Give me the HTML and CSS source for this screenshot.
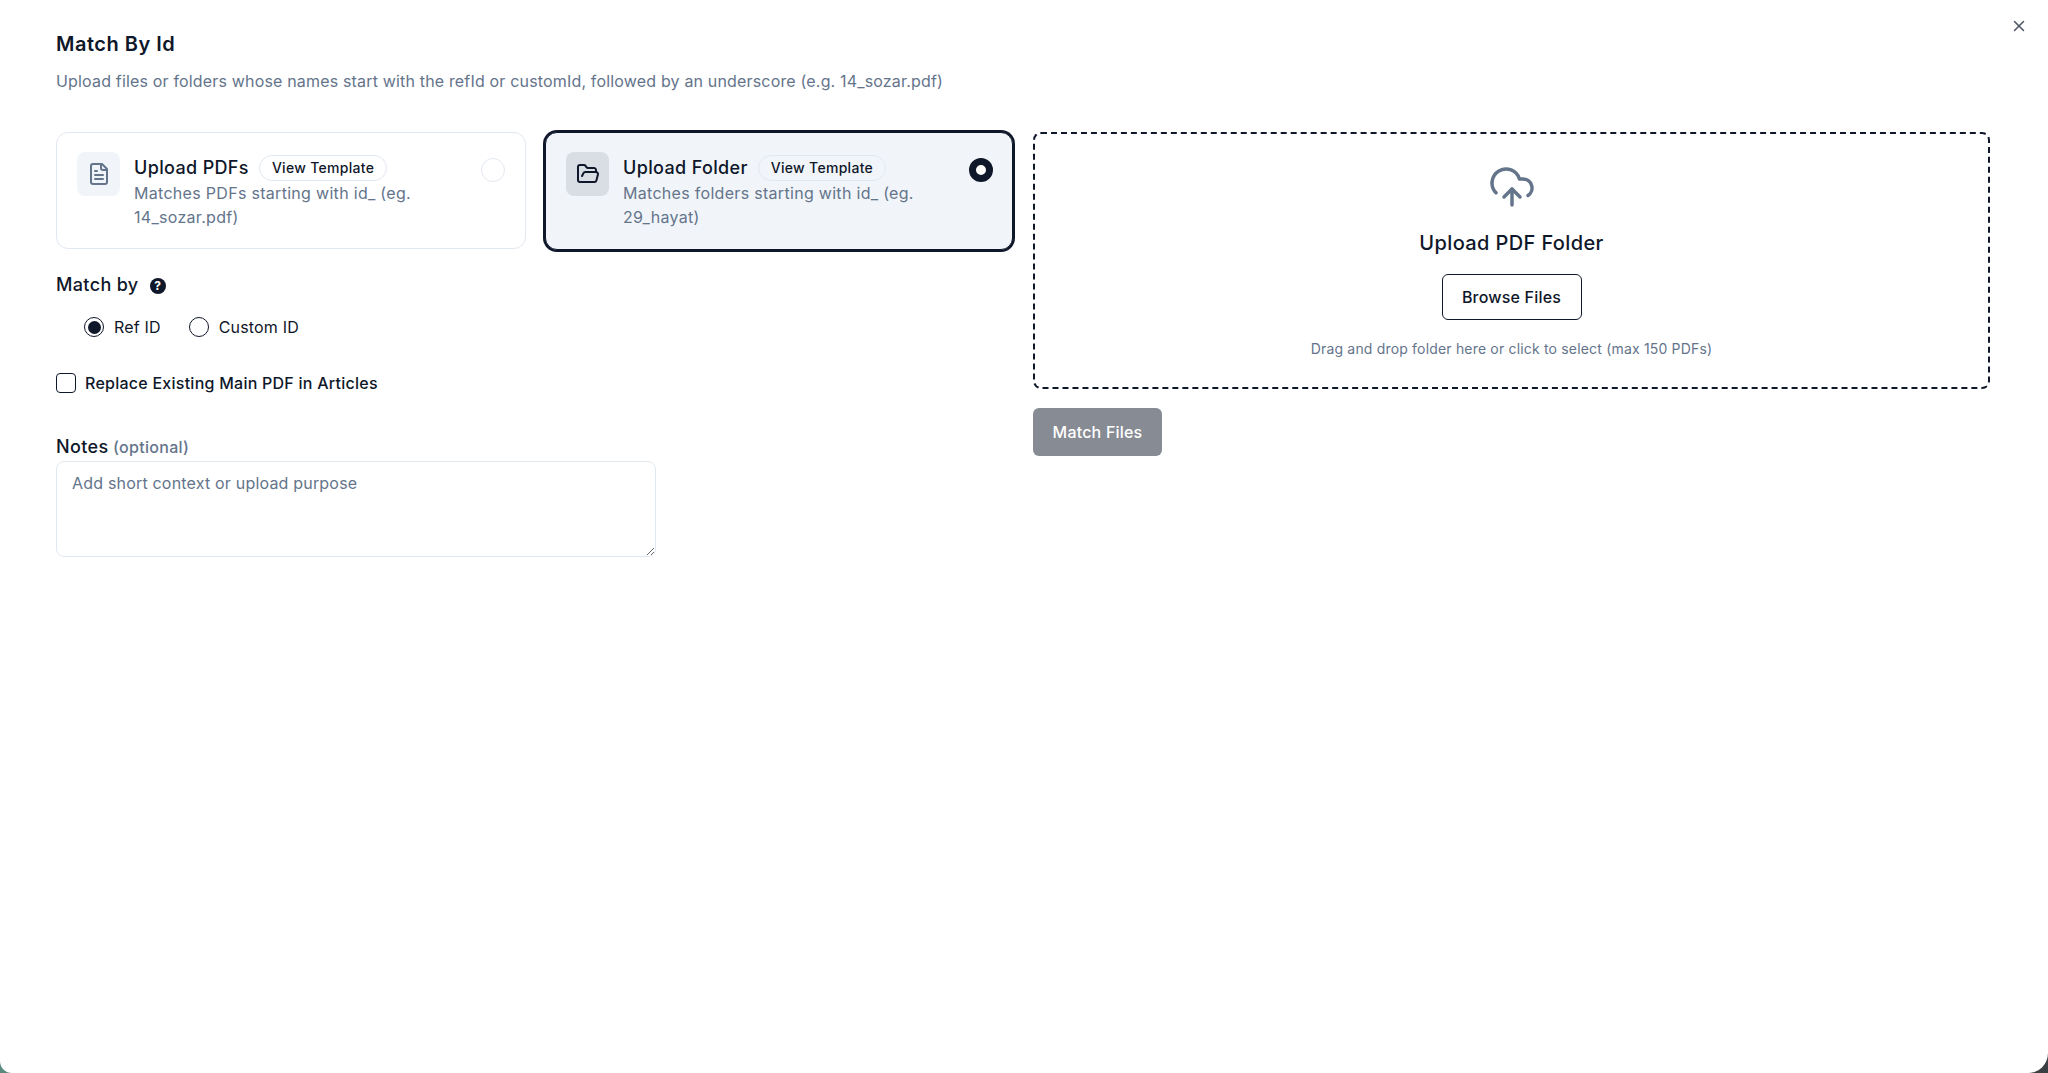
FILE: index.html
```html
<!DOCTYPE html>
<html>
<head>
	<title>Match By Id</title>
	<link rel="stylesheet" href="styles.css">
</head>
<body>

	<!-- Modal -->
	<div class="modal">
		<button class="close-btn" aria-label="Close">
			<svg width="18" height="18" viewBox="0 0 24 24" fill="none" stroke="currentColor" stroke-width="2" stroke-linecap="round" stroke-linejoin="round"><path d="M18 6 6 18"/><path d="m6 6 12 12"/></svg>
		</button>

		<h1 class="modal-title">Match By Id</h1>
		<p class="modal-desc">Upload files or folders whose names start with the refId or customId, followed by an underscore (e.g. 14_sozar.pdf)</p>

		<div class="modal-body">

			<!-- Left column -->
			<div class="left-col">
				<div class="mode-cards">
					<div class="mode-card">
						<div class="mode-icon">
							<svg width="24" height="24" viewBox="0 0 24 24" fill="none" stroke="currentColor" stroke-width="2" stroke-linecap="round" stroke-linejoin="round"><path d="M15 2H6a2 2 0 0 0-2 2v16a2 2 0 0 0 2 2h12a2 2 0 0 0 2-2V7Z"/><path d="M14 2v4a2 2 0 0 0 2 2h4"/><path d="M10 9H8"/><path d="M16 13H8"/><path d="M16 17H8"/></svg>
						</div>
						<div class="mode-text">
							<div class="mode-head">
								<span class="mode-name">Upload PDFs</span>
								<span class="pill">View Template</span>
							</div>
							<div class="mode-sub">Matches PDFs starting with id_ (eg. 14_sozar.pdf)</div>
						</div>
						<span class="mode-radio"></span>
					</div>

					<div class="mode-card selected">
						<div class="mode-icon">
							<svg width="24" height="24" viewBox="0 0 24 24" fill="none" stroke="currentColor" stroke-width="2" stroke-linecap="round" stroke-linejoin="round"><path d="m6 14 1.5-2.9A2 2 0 0 1 9.24 10H20a2 2 0 0 1 1.94 2.5l-1.54 6a2 2 0 0 1-1.95 1.5H4a2 2 0 0 1-2-2V5a2 2 0 0 1 2-2h3.9a2 2 0 0 1 1.69.9l.81 1.2a2 2 0 0 0 1.67.9H18a2 2 0 0 1 2 2v2"/></svg>
						</div>
						<div class="mode-text">
							<div class="mode-head">
								<span class="mode-name">Upload Folder</span>
								<span class="pill">View Template</span>
							</div>
							<div class="mode-sub">Matches folders starting with id_ (eg. 29_hayat)</div>
						</div>
						<span class="mode-radio"></span>
					</div>
				</div>

				<div class="match-by">
					<span class="field-label">Match by</span>
					<span class="help-icon">?</span>
				</div>
				<div class="radio-group">
					<label class="radio-item"><span class="radio checked"></span>Ref ID</label>
					<label class="radio-item"><span class="radio"></span>Custom ID</label>
				</div>

				<label class="check-row"><span class="checkbox"></span>Replace Existing Main PDF in Articles</label>

				<div class="notes-label"><span class="field-label">Notes</span> <span class="optional">(optional)</span></div>
				<textarea class="notes" placeholder="Add short context or upload purpose"></textarea>
			</div>

			<!-- Right column -->
			<div class="right-col">
				<div class="dropzone">
					<svg class="cloud" width="48" height="48" viewBox="0 0 24 24" fill="none" stroke="currentColor" stroke-width="1.75" stroke-linecap="round" stroke-linejoin="round"><path d="M12 13v8"/><path d="M4 14.899A7 7 0 1 1 15.71 8h1.79a4.5 4.5 0 0 1 2.5 8.242"/><path d="m8 17 4-4 4 4"/></svg>
					<div class="drop-title">Upload PDF Folder</div>
					<button class="browse-btn">Browse Files</button>
					<div class="drop-hint">Drag and drop folder here or click to select (max 150 PDFs)</div>
				</div>
				<button class="match-btn">Match Files</button>
			</div>
		</div>
	</div>

</body>
</html>
```

FILE: styles.css
```css
* {
	box-sizing: border-box;
}

/* Page behind the modal, only seen in the bottom corners */
body {
	margin: 0;
	height: 1073px;
	overflow: hidden;
	font-family: Inter, "Liberation Sans", sans-serif;
	color: #0f172a;
	background: linear-gradient(90deg, #5a8a7d 0%, #5a8a7d 50%, #3a3f44 100%);
}

/* Modal */
.modal {
	position: relative;
	height: 1073px;
	padding: 33px 58px 0 56px;
	background-color: #fff;
	border-bottom-left-radius: 12px;
	border-bottom-right-radius: 20px;
}

.close-btn {
	position: absolute;
	top: 17px;
	right: 20px;
	padding: 0;
	display: flex;
	border: none;
	background: none;
	color: #4b5563;
}

.modal-title {
	margin: 0;
	font-size: 20px;
	line-height: 23px;
	font-weight: 600;
	letter-spacing: 0.5px;
}

.modal-desc {
	margin: 13px 0 0;
	font-size: 16px;
	line-height: 24px;
	letter-spacing: 0.17px;
	color: #64748b;
}

.modal-body {
	display: grid;
	grid-template-columns: 957px 957px;
	gap: 20px;
	margin-top: 39px;
}

/* Mode cards */
.mode-cards {
	display: grid;
	grid-template-columns: 470px 468px;
	gap: 19px;
}

.mode-card {
	display: flex;
	align-items: flex-start;
	gap: 14px;
	height: 117px;
	padding: 19px 20px;
	border: 1px solid #e2e8f0;
	border-radius: 12px;
}

.mode-card.selected {
	height: 118px;
	margin-bottom: -1px;
	background-color: #f1f5f9;
	border: 1px solid #0f172a;
	box-shadow: 0 0 0 2px #0f172a;
}

.mode-icon {
	flex: none;
	display: flex;
	align-items: center;
	justify-content: center;
	width: 43px;
	height: 44px;
	border-radius: 8px;
	background-color: #f1f5f9;
	color: #64748b;
}

.selected .mode-icon {
	background-color: #d9dee5;
	color: #0f172a;
}

.mode-text {
	flex: 1;
	min-width: 0;
	padding-top: 2px;
}

.mode-head {
	display: flex;
	align-items: center;
	gap: 10px;
}

.mode-name {
	font-size: 18px;
	line-height: 27px;
	font-weight: 500;
	letter-spacing: 0.35px;
}

.pill {
	padding: 0 12px;
	font-size: 14px;
	line-height: 24px;
	font-weight: 500;
	letter-spacing: 0.3px;
	border: 1px solid #e2e8f0;
	border-radius: 13px;
}

.mode-sub {
	font-size: 16px;
	line-height: 24px;
	letter-spacing: 0.3px;
	color: #64748b;
}

.mode-radio {
	flex: none;
	width: 24px;
	height: 24px;
	margin-top: 6px;
	border: 1px solid #e2e8f0;
	border-radius: 50%;
}

.selected .mode-radio {
	margin-right: -1px;
	border: 7.5px solid #0f172a;
	background-color: #fff;
}

/* Left column form */
.match-by {
	display: flex;
	align-items: center;
	gap: 11px;
	margin-top: 22px;
}

.field-label {
	font-size: 18px;
	line-height: 28px;
	font-weight: 500;
	letter-spacing: 0.35px;
}

.help-icon {
	width: 16px;
	height: 16px;
	margin-top: 2px;
	border-radius: 50%;
	background-color: #0f172a;
	color: #fff;
	font-size: 12px;
	line-height: 16px;
	font-weight: 700;
	text-align: center;
}

.radio-group {
	display: flex;
	gap: 28px;
	margin-top: 16px;
	padding-left: 28px;
}

.radio-item {
	display: flex;
	align-items: center;
	gap: 10px;
	font-size: 16px;
	line-height: 24px;
	letter-spacing: 0.17px;
}

.radio {
	width: 20px;
	height: 20px;
	border: 1.5px solid #0f172a;
	border-radius: 50%;
	background-color: #fff;
}

.radio.checked {
	padding: 2.5px;
	background-color: #0f172a;
	background-clip: content-box;
}

.check-row {
	display: flex;
	align-items: center;
	gap: 9px;
	margin-top: 32px;
	font-size: 16px;
	line-height: 24px;
	font-weight: 500;
	letter-spacing: 0.25px;
}

.checkbox {
	width: 20px;
	height: 20px;
	border: 1.5px solid #0f172a;
	border-radius: 4px;
}

.notes-label {
	margin-top: 38px;
	line-height: 27px;
}

.optional {
	font-size: 16px;
	font-weight: 500;
	letter-spacing: 0.3px;
	color: #64748b;
}

.notes {
	display: block;
	width: 600px;
	height: 96px;
	margin-top: 0;
	padding: 9px 15px;
	border: 1px solid #e2e8f0;
	border-radius: 8px;
	font-family: inherit;
	font-size: 16px;
	line-height: 24px;
	letter-spacing: 0.19px;
	color: #0f172a;
	outline: none;
}

.notes::placeholder {
	color: #64748b;
}

/* Right column */
.dropzone {
	display: flex;
	flex-direction: column;
	align-items: center;
	height: 257px;
	padding-top: 29px;
	border: 2px dashed #0f172a;
	border-radius: 8px;
}

.cloud {
	color: #64748b;
}

.drop-title {
	margin-top: 18px;
	font-size: 20px;
	line-height: 28px;
	font-weight: 500;
	letter-spacing: 0.38px;
}

.browse-btn {
	width: 140px;
	height: 46px;
	margin-top: 17px;
	border: 1px solid #0f172a;
	border-radius: 6px;
	background-color: #fff;
	font-family: inherit;
	font-size: 16px;
	font-weight: 500;
	letter-spacing: 0.2px;
	color: #0f172a;
}

.drop-hint {
	margin-top: 19px;
	font-size: 14px;
	line-height: 20px;
	letter-spacing: 0.18px;
	color: #64748b;
}

.match-btn {
	display: block;
	width: 129px;
	height: 48px;
	margin-top: 19px;
	border: none;
	border-radius: 6px;
	background-color: #878b94;
	font-family: inherit;
	font-size: 16px;
	font-weight: 500;
	letter-spacing: 0.2px;
	color: #fff;
}
```
